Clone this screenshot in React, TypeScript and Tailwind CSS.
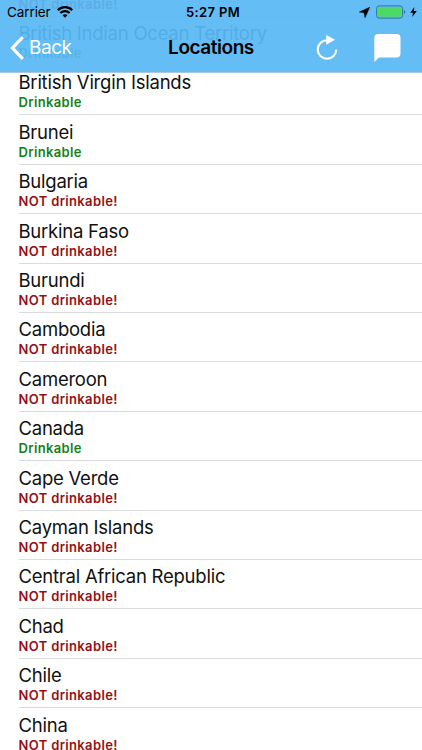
interface Location {
  name: string;
  drinkable: boolean;
}

const locations: Location[] = [
  { name: "Brazil", drinkable: false },
  { name: "British Indian Ocean Territory", drinkable: true },
  { name: "British Virgin Islands", drinkable: true },
  { name: "Brunei", drinkable: true },
  { name: "Bulgaria", drinkable: false },
  { name: "Burkina Faso", drinkable: false },
  { name: "Burundi", drinkable: false },
  { name: "Cambodia", drinkable: false },
  { name: "Cameroon", drinkable: false },
  { name: "Canada", drinkable: true },
  { name: "Cape Verde", drinkable: false },
  { name: "Cayman Islands", drinkable: false },
  { name: "Central African Republic", drinkable: false },
  { name: "Chad", drinkable: false },
  { name: "Chile", drinkable: false },
  { name: "China", drinkable: false },
];

function StatusBar() {
  return (
    <div className="grid h-6 grid-cols-3 items-center text-[13.5px] leading-6 text-black">
      <div className="flex items-center gap-[6px] pl-[7px]">
        <span className="tracking-[-0.1px]">Carrier</span>
        <svg width="16" height="12" viewBox="0 0 16 12" fill="none" stroke="currentColor" strokeWidth="2.2">
          <path d="M0.8 4.2 C5 0.2 11 0.2 15.2 4.2" />
          <path d="M3.4 7 C6 4.6 10 4.6 12.6 7" />
          <path d="M8 11.7 L5.5 9.2 C7 7.9 9 7.9 10.5 9.2 Z" fill="currentColor" stroke="none" />
        </svg>
      </div>
      <span className="pl-[4px] text-center text-[13px] font-semibold tracking-[0.35px]">5:27 PM</span>
      <div className="flex items-center justify-end pr-[5px]">
        <svg width="11" height="11" viewBox="0 0 11 11" className="mr-[6px]">
          <path d="M10.7 0.3 L6 10.7 L5.2 5.8 L0.3 5 Z" fill="currentColor" stroke="currentColor" strokeWidth="0.5" />
        </svg>
        <svg width="30" height="14" viewBox="0 0 30 14" className="mr-[4px]">
          <rect x="0.6" y="0.9" width="26" height="12.2" rx="2.6" fill="none" stroke="#33739a" />
          <rect x="2" y="2.3" width="23.2" height="9.4" rx="1.4" fill="#4cd964" />
          <path d="M28 5 C29.6 5.8 29.6 8.2 28 9 Z" fill="#33739a" />
        </svg>
        <svg width="7" height="10" viewBox="0 0 7 10">
          <path d="M4.4 0 L0.2 5.7 H3 L2.2 10 L6.8 4 H3.9 Z" fill="currentColor" />
        </svg>
      </div>
    </div>
  );
}

function NavBar() {
  return (
    <div className="grid h-12 grid-cols-3 items-center">
      <button className="flex items-center gap-[5px] pl-[10px] text-[19px] tracking-[-0.45px] text-white">
        <svg width="14" height="24" viewBox="0 0 14 24" fill="none" stroke="currentColor" strokeWidth="3.2">
          <path d="M12.8 1.2 L2.4 12 L12.8 22.8" />
        </svg>
        <span>Back</span>
      </button>
      <h1 className="text-center text-[19px] font-semibold tracking-[-0.45px] text-black">Locations</h1>
      <div className="flex items-center justify-end pr-[21px] text-white">
        <svg width="22" height="26" viewBox="0 0 22 26" className="mr-[36px]">
          <path d="M11 5.2 A9.3 9.3 0 1 0 20.3 14.5" fill="none" stroke="currentColor" strokeWidth="2.1" />
          <path d="M10.2 0 L19 4.8 L10.2 9.8 Z" fill="currentColor" />
        </svg>
        <svg width="27" height="28" viewBox="0 0 27 28">
          <path d="M4 0 H22.5 Q26.5 0 26.5 4 V19.5 Q26.5 23.5 22.5 23.5 H5 L0.3 28 V4 Q0.3 0 4 0 Z" fill="currentColor" />
        </svg>
      </div>
    </div>
  );
}

function LocationRow({ location }: { location: Location }) {
  return (
    <li className="h-[49.42px] border-b border-[#dcdce0]">
      <p className="pt-[4.5px] text-[18.5px] leading-6 tracking-[-0.24px] text-[#111]">{location.name}</p>
      <p className={`text-[13px] font-semibold leading-4 tracking-[0.35px] ${location.drinkable ? "text-[#168018]" : "text-[#960f14]"}`}>
        {location.drinkable ? "Drinkable" : "NOT drinkable!"}
      </p>
    </li>
  );
}

export default function App() {
  return (
    <div className="relative h-[750px] w-[422px] overflow-hidden bg-white font-[Inter,sans-serif]">
      <header className="absolute inset-x-0 top-0 z-10 h-[72.5px] border-b border-[#a9c9dd] bg-[#58b8f4]/93">
        <StatusBar />
        <NavBar />
      </header>
      <ul className="-mt-[32.9px] pl-[18.5px]">
        {locations.map((location) => (
          <LocationRow key={location.name} location={location} />
        ))}
      </ul>
    </div>
  );
}
